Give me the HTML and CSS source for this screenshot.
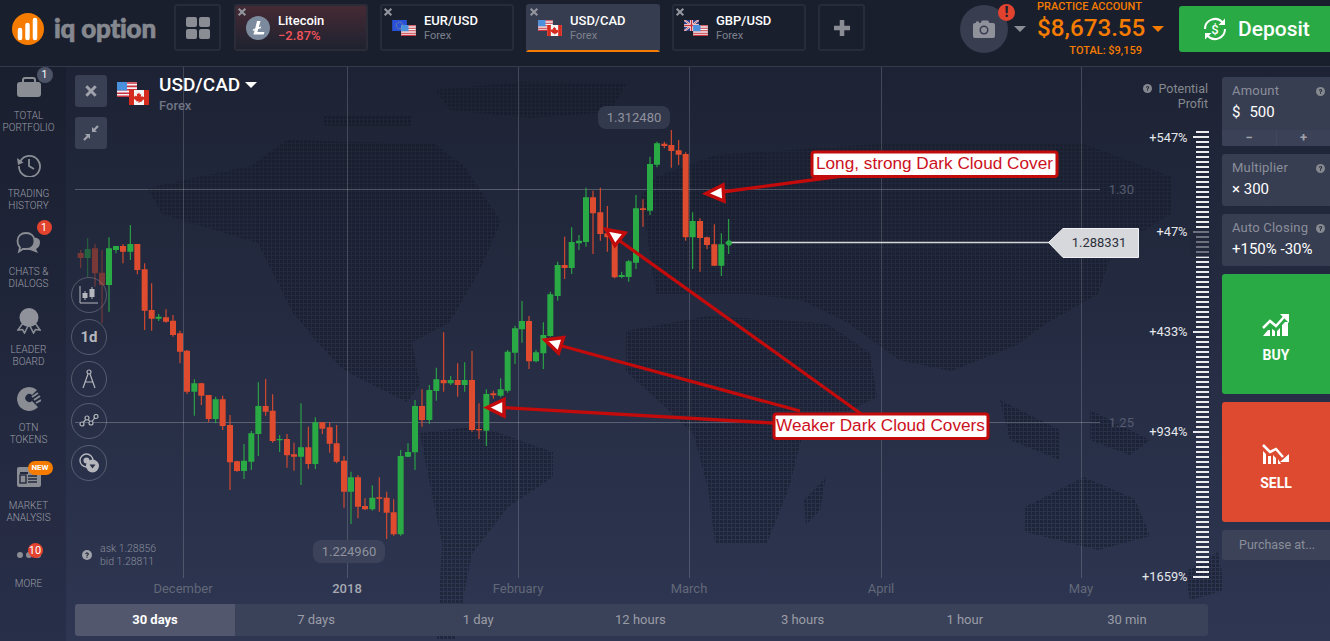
FILE: index.html
```html
<!DOCTYPE html>
<html lang="en">
<head>
<meta charset="utf-8">
<title>IQ Option</title>
<link rel="stylesheet" href="styles.css">
</head>
<body>
<svg class="defs" width="0" height="0" aria-hidden="true">
  <symbol id="f-us" viewBox="0 0 20 15">
    <rect width="20" height="15" fill="#f4f4f4"/>
    <path d="M0 1h20M0 4.4h20M0 7.8h20M0 11.2h20M0 14.2h20" stroke="#c8313e" stroke-width="1.6"/>
    <rect width="10" height="8.5" fill="#4a90dc"/>
  </symbol>
  <symbol id="f-ca" viewBox="0 0 20 15">
    <rect width="20" height="15" fill="#f4f4f4"/>
    <rect width="5" height="15" fill="#d52b1e"/><rect x="15" width="5" height="15" fill="#d52b1e"/>
    <path d="M10 2.5l1 2 1.2-.5-.4 3 1.6-1 .5 1 1.5-.2-.6 1.8.6.5-2.6 2-.4 1-2-.3V13h-.8v-1.7l-2 .3-.4-1-2.6-2 .6-.5-.6-1.8 1.5.2.5-1 1.6 1-.4-3 1.2.5z" fill="#d52b1e"/>
  </symbol>
  <symbol id="f-eu" viewBox="0 0 20 15">
    <rect width="20" height="15" fill="#2a52d8"/>
    <circle cx="10" cy="7.500" r="4.500" fill="none" stroke="#e8c83a" stroke-width="1" stroke-dasharray="1 1.350"/>
  </symbol>
  <symbol id="f-gb" viewBox="0 0 20 15">
    <rect width="20" height="15" fill="#2b3f8c"/>
    <path d="M0 0l20 15M20 0L0 15" stroke="#f4f4f4" stroke-width="2.600"/>
    <path d="M0 0l20 15M20 0L0 15" stroke="#c8313e" stroke-width="1"/>
    <path d="M10 0v15M0 7.500h20" stroke="#f4f4f4" stroke-width="4"/>
    <path d="M10 0v15M0 7.500h20" stroke="#c8313e" stroke-width="2"/>
  </symbol>
  <symbol id="help" viewBox="0 0 12 12">
    <circle cx="6" cy="6" r="6" fill="currentColor"/>
    <path d="M3.900 4.700C4 3.400 5 3 6 3c1.300 0 2.200.7 2.200 1.800 0 1.500-1.700 1.500-1.700 2.700H5.300c0-1.900 1.500-1.900 1.500-2.700 0-.5-.3-.7-.8-.7s-.8.300-.9.800zM5.300 8.200h1.300v1.200H5.300z" fill="#1e2436"/>
  </symbol>
  <symbol id="pair-x" viewBox="0 0 12 12">
    <path d="M2 2l8 8M10 2l-8 8" stroke="currentColor" stroke-width="2.500"/>
  </symbol>
</svg>

<div class="app">
  <header class="topbar">
    <div class="brand">
      <svg class="brand-mark" viewBox="0 0 32 32" width="32" height="32">
        <circle cx="16" cy="16" r="16" fill="#f57c00"/>
        <path d="M8 25v-8M15.500 25V12M23 25V7" stroke="#fff" stroke-width="4.500" stroke-linecap="round"/>
      </svg>
      <span class="brand-name">iq option</span>
    </div>
    <button class="square-btn grid-btn">
      <svg viewBox="0 0 24 22" width="24" height="22"><g fill="#8a8d94"><rect width="11" height="10" rx="2"/><rect x="13" width="11" height="10" rx="2"/><rect y="12" width="11" height="10" rx="2"/><rect x="13" y="12" width="11" height="10" rx="2"/></g></svg>
    </button>
    <nav class="tabs">
      <div class="tab tab-loss">
        <svg class="tab-close"><use href="#pair-x"/></svg>
        <svg class="coin" viewBox="0 0 24 24" width="24" height="24"><circle cx="12" cy="12" r="12" fill="#7b8a9c"/><path d="M11 5h3.500l-1.700 6.300 2.500-.9-.5 1.800-2.600.9-.8 2.900h7l-.7 2.500H7.400l1.300-4.300-2 .7.5-1.700 2-.7z" fill="#fff"/></svg>
        <div class="tab-text"><span class="tab-title">Litecoin</span><span class="tab-change">−2.87%</span></div>
      </div>
      <div class="tab">
        <svg class="tab-close"><use href="#pair-x"/></svg>
        <span class="flags"><svg class="flag-a"><use href="#f-eu"/></svg><svg class="flag-b"><use href="#f-us"/></svg></span>
        <div class="tab-text"><span class="tab-title">EUR/USD</span><span class="tab-sub">Forex</span></div>
      </div>
      <div class="tab tab-active">
        <svg class="tab-close"><use href="#pair-x"/></svg>
        <span class="flags"><svg class="flag-a"><use href="#f-us"/></svg><svg class="flag-b"><use href="#f-ca"/></svg></span>
        <div class="tab-text"><span class="tab-title">USD/CAD</span><span class="tab-sub">Forex</span></div>
      </div>
      <div class="tab">
        <svg class="tab-close"><use href="#pair-x"/></svg>
        <span class="flags"><svg class="flag-a"><use href="#f-gb"/></svg><svg class="flag-b"><use href="#f-us"/></svg></span>
        <div class="tab-text"><span class="tab-title">GBP/USD</span><span class="tab-sub">Forex</span></div>
      </div>
    </nav>
    <button class="square-btn plus-btn">
      <svg viewBox="0 0 16 16" width="16" height="16"><path d="M8 0v16M0 8h16" stroke="#8a8d94" stroke-width="4.500"/></svg>
    </button>
    <div class="profile">
      <div class="avatar">
        <svg viewBox="0 0 22 18" width="22" height="18"><path d="M0 5a2 2 0 0 1 2-2h1V1.500h3V3h1.500L9 .5h6L16.500 3H20a2 2 0 0 1 2 2v11a2 2 0 0 1-2 2H2a2 2 0 0 1-2-2z" fill="#8f929b"/><circle cx="11" cy="10" r="4.500" fill="#383d4f"/><circle cx="11" cy="10" r="3" fill="#8f929b"/></svg>
        <span class="alert">!</span>
      </div>
      <span class="caret caret-gray"></span>
    </div>
    <div class="balance">
      <div class="balance-label">PRACTICE ACCOUNT</div>
      <div class="balance-amount">$8,673.55<span class="caret caret-orange"></span></div>
      <div class="balance-total">TOTAL: $9,159</div>
    </div>
    <button class="deposit">
      <svg viewBox="0 0 26 26" width="26" height="26"><g fill="none" stroke="#fff" stroke-width="2"><path d="M3 13a10 10 0 0 1 17.500-6.600"/><path d="M23 13a10 10 0 0 1-17.500 6.600"/></g><path d="M23 2.500v6.500h-6.500zM3 23.500V17h6.500z" fill="#fff"/><text x="13" y="18" text-anchor="middle" class="deposit-sign">$</text></svg>
      <span>Deposit</span>
    </button>
  </header>

  <div class="workspace">
    <aside class="sidebar">
      <a class="side-item">
        <span class="side-icon">
          <svg viewBox="0 0 24 20" width="24" height="20"><path d="M6 6V3a2 2 0 0 1 2-2h8a2 2 0 0 1 2 2v3" fill="none" stroke="#8a8d94" stroke-width="2"/><rect y="5" width="24" height="15" rx="3" fill="#8a8d94"/></svg>
          <span class="badge badge-gray">1</span>
        </span>
        <span class="side-label">TOTAL<br>PORTFOLIO</span>
      </a>
      <a class="side-item">
        <span class="side-icon">
          <svg viewBox="0 0 24 24" width="24" height="24"><g fill="none" stroke="#8a8d94" stroke-width="1.800"><path d="M3.500 8A10.500 10.500 0 1 1 2 13"/><path d="M12 6v7l5 3"/></g><path d="M0 5l6.500 4.500L1 12z" fill="#8a8d94"/></svg>
        </span>
        <span class="side-label">TRADING<br>HISTORY</span>
      </a>
      <a class="side-item">
        <span class="side-icon">
          <svg viewBox="0 0 26 24" width="26" height="24"><path d="M24 11c0 4-2 6-4 7l2 4-8-3c-3 0-5-2-5-5 0-4 3-6 7-7 5-1 8 1 8 4z" fill="#8a8d94"/><path d="M1.500 10C1.500 5 5 2 10 2s8.500 3 8.500 8-3.500 8-8.500 8H7l-4 2.500 1-4C2.500 15 1.500 13 1.500 10z" fill="#232a3d" stroke="#8a8d94" stroke-width="1.800"/></svg>
          <span class="badge badge-red">1</span>
        </span>
        <span class="side-label">CHATS &amp;<br>DIALOGS</span>
      </a>
      <a class="side-item">
        <span class="side-icon">
          <svg viewBox="0 0 24 26" width="24" height="26"><path d="M6 15l-5 7 4.500-.5 2 3.500 4-8zM18 15l5 7-4.500-.5-2 3.500-4-8z" fill="none" stroke="#8a8d94" stroke-width="1.600"/><circle cx="12" cy="9.500" r="9.500" fill="#8f929b"/></svg>
        </span>
        <span class="side-label">LEADER<br>BOARD</span>
      </a>
      <a class="side-item">
        <span class="side-icon">
          <svg viewBox="0 0 24 24" width="24" height="24"><path d="M12 0a12 12 0 1 0 9 20l-6-6a4 4 0 1 1 0-6l5-5A12 12 0 0 0 12 0z" fill="#8a8d94"/><path d="M15 10l6-4M17 13l6-4M19 16l5-3" stroke="#8a8d94" stroke-width="2"/></svg>
        </span>
        <span class="side-label">OTN<br>TOKENS</span>
      </a>
      <a class="side-item">
        <span class="side-icon">
          <svg viewBox="0 0 24 20" width="24" height="20"><rect width="24" height="20" rx="2" fill="#8a8d94"/><rect x="3" y="5" width="8" height="2" fill="#232a3d"/><rect x="3" y="8" width="6" height="8" fill="none" stroke="#232a3d" stroke-width="1.400"/><path d="M11 9h9M11 12h9M11 15h9" stroke="#232a3d" stroke-width="1.400"/></svg>
          <span class="badge-new">NEW</span>
        </span>
        <span class="side-label">MARKET<br>ANALYSIS</span>
      </a>
      <a class="side-item">
        <span class="side-icon">
          <svg viewBox="0 0 24 6" width="24" height="6"><g fill="#8a8d94"><circle cx="3" cy="3" r="3"/><circle cx="12" cy="3" r="3"/><circle cx="21" cy="3" r="3"/></g></svg>
          <span class="badge badge-red badge-wide">10</span>
        </span>
        <span class="side-label">MORE</span>
      </a>
    </aside>

    <main class="chart">
      <svg class="chart-canvas" viewBox="66 67 1156 574" width="1156" height="574">
        <defs>
          <pattern id="dots" width="4" height="4" patternUnits="userSpaceOnUse">
            <rect width="3" height="3" fill="#141927"/>
          </pattern>
          <pattern id="ticks" width="13" height="5" y="131" patternUnits="userSpaceOnUse">
            <rect width="13" height="2" fill="#e9ebef"/>
          </pattern>
        </defs>

        <g class="map" fill="url(#dots)">
          <path d="M147 188L250 166 287 140 435 144 464 166 501 221 479 272 449 323 412 342 420 385 407 402 357 377 340 367 313 337 293 313 280 287 258 243 162 214z"/>
          <path d="M324 115L412 115 412 126 324 126z"/>
          <path d="M435 90L520 82 626 84 610 112 530 118 450 110z"/>
          <path d="M656 177L715 155 877 144 1084 144 1172 177 1172 213 1113 250 1098 294 1047 323 1017 345 951 371 899 360 848 323 803 301 752 294 656 294 641 195z"/>
          <path d="M626 331L708 316 826 323 870 353 877 397 803 433 789 488 767 543 715 543 708 488 693 433 626 371z"/>
          <path d="M420 433L479 426 553 452 553 477 508 507 472 554 455 640 437 640 442 543 427 470z"/>
          <path d="M1025 507L1084 477 1135 499 1150 536 1098 550 1025 532z"/>
          <path d="M1000 400L1060 430 1060 460 1010 440zM1090 410L1150 440 1130 455 1090 440zM804 500L826 477 820 510 806 525z"/>
          <path d="M1185 572L1218 552 1225 590 1190 600z"/>
        </g>

        <g class="grid-lines">
          <path d="M183.500 67V578M347.500 67V578M518.500 67V578M689.500 67V578M881.500 67V578M1081.500 67V578"/>
          <path class="grid-h" d="M75 189.500H1100M75 422.500H1100"/>
        </g>
        <text x="1134" y="194" class="axis-price">1.30</text>
        <text x="1134" y="427" class="axis-price">1.25</text>

        <g transform="translate(90 220) scale(.33333)">
          <g class="faded">
            <path class="wick-r" d="M-28 90V144M15 72V200M36 90V310"/>
            <path class="body-r" d="M-28 99V114M15 85V160M36 158V195"/>
            <path class="wick-g" d="M-7 54V171"/>
            <path class="body-g" d="M-7 87V114"/>
          </g>
          <path class="wick-r" d="M99 72V130M142 72V163M164 130V330M185 190V332M228 268V308M249 285V350M270 332V430M291 390V522M334 488V555M356 525V607M398 527V630M420 585V810M441 722V755M527 477V587M548 523V668M591 642V743M612 668V752M655 620V747M697 607V642M719 607V698M740 615V730M762 708V863M804 765V895M825 835V870M868 772V875M890 815V957M911 838V947"/>
          <path class="body-r" d="M99 78V95M142 72V150M164 148V272M185 270V296M228 292V305M249 302V345M270 340V395M291 392V515M334 490V527M356 525V597M398 538V618M420 615V727M441 724V753M527 558V575M548 572V663M591 657V706M612 703V710M655 682V732M697 607V626M719 622V671M740 670V725M762 722V815M804 772V860M825 858V868M868 832V836M890 833V878M911 877V943"/>
          <path class="wick-g" d="M57 52V275M78 78V100M121 15V120M206 282V303M313 478V587M377 530V610M462 672V777M484 633V750M505 487V708M569 645V696M633 550V795M676 592V747M783 755V912M847 796V872M932 690V947M954 670V712M975 540V750"/>
          <path class="body-g" d="M57 85V195M78 78V90M121 72V95M206 290V296M313 490V515M377 538V597M462 722V753M484 640V725M505 558V642M569 657V661M633 682V710M676 607V732M783 772V815M847 833V868M932 708V943M954 696V710M975 558V697"/>
        </g>
        <g transform="translate(400 120) scale(.33333)">
          <path class="wick-r" d="M66 808V920M131 637V815M173 730V830M216 693V935M237 850V957M280 812V836M387 588V747M494 350V477M579 212V402M601 203V362M622 258V395M644 350V475M729 238V320M793 65V85M814 30V143M836 60V135M857 97V362M900 295V455M921 350V387M943 313V438"/>
          <path class="body-r" d="M66 858V900M131 780V790M173 780V795M216 780V930M237 927V931M280 820V826M387 603V724M494 435V444M579 232V280M601 277V342M622 340V352M644 350V472M729 265V270M793 71V78M814 75V93M836 91V104M857 102V352M900 303V354M921 352V375M943 373V437"/>
          <path class="wick-g" d="M88 795V912M109 743V842M152 768V795M194 727V815M259 808V978M302 775V832M323 690V818M345 617V732M366 543V668M408 690V727M430 607V747M451 515V650M473 425V542M515 322V462M537 345V390M558 203V380M665 455V475M686 420V485M708 225V447M750 110V285M771 65V142M878 277V447M964 340V468M986 297V402"/>
          <path class="body-g" d="M88 810V900M109 778V813M152 780V790M194 780V795M259 822V932M302 808V827M323 695V812M345 625V698M366 603V628M408 697V724M430 645V700M451 523V648M473 435V528M515 366V444M537 362V370M558 232V366M665 465V471M686 424V471M708 265V428M750 132V272M771 70V134M878 303V352M964 373V437M986 365V372"/>
        </g>

        <rect x="598" y="106" width="72" height="23" rx="8" class="bubble-top"/>
        <text x="634" y="122" class="bubble-text">1.312480</text>
        <rect x="313" y="540" width="72" height="23" rx="8" class="bubble-bottom"/>
        <text x="349" y="556" class="bubble-text">1.224960</text>

        <path class="price-line" d="M730 242.500H1050"/>
        <circle cx="729" cy="243" r="2.800" fill="#2aaa45"/>
        <path class="price-tag" d="M1048.500 242.500L1063 228.500H1138.500V257.500H1063z"/>
        <text x="1099" y="247" class="price-text">1.288331</text>

        <text x="183" y="593" class="month">December</text>
        <text x="347" y="593" class="month month-strong">2018</text>
        <text x="518" y="593" class="month">February</text>
        <text x="689" y="593" class="month">March</text>
        <text x="881" y="593" class="month">April</text>
        <text x="1081" y="593" class="month">May</text>

        <rect x="1196" y="131" width="13" height="448" fill="url(#ticks)"/>
        <path class="major" d="M1193 137H1196M1193 232H1196M1193 332H1196M1193 432H1196M1193 577H1196"/>
        <rect x="1190" y="229" width="20" height="28" class="ruler-dim"/>
        <text x="1187.500" y="142" class="profit">+547%</text>
        <text x="1187.500" y="236" class="profit">+47%</text>
        <text x="1187.500" y="336" class="profit">+433%</text>
        <text x="1187.500" y="436" class="profit">+934%</text>
        <text x="1187.500" y="581" class="profit">+1659%</text>

        <g class="arrow">
          <path class="arrow-line" d="M722 192L842 176"/>
          <path class="arrow-head" d="M706 193.500L723 185 724 201z"/>
          <path class="arrow-line" d="M503 407.500L790 424"/>
          <path class="arrow-head" d="M487 407.500L504 399.500 504 416z"/>
          <path class="arrow-line" d="M562 346L800 411"/>
          <path class="arrow-head" d="M545 340L563.500 337.500 558.500 353z"/>
          <path class="arrow-line" d="M620 241L864 416"/>
          <path class="arrow-head" d="M606 229.500L625 233 615 245.500z"/>
        </g>
        <rect x="812" y="152" width="245" height="24.500" rx="2.500" class="note-box"/>
        <text x="816" y="169" class="note-text">Long, strong Dark Cloud Cover</text>
        <rect x="774" y="414" width="214" height="24.500" rx="2.500" class="note-box"/>
        <text x="776" y="431" class="note-text">Weaker Dark Cloud Covers</text>
      </svg>

      <div class="chart-head">
        <div class="chart-controls">
          <button class="ctl"><svg width="14" height="14"><use href="#pair-x"/></svg></button>
          <button class="ctl">
            <svg viewBox="0 0 16 16" width="16" height="16"><path d="M1 15l5-5M15 1l-5 5" stroke="#a0a3ab" stroke-width="2.200"/><path d="M9 2v5h5zM2 9h5v5z" fill="#a0a3ab"/></svg>
          </button>
        </div>
        <span class="pair-flags"><svg class="flag-a"><use href="#f-us"/></svg><svg class="flag-b"><use href="#f-ca"/></svg></span>
        <div class="pair">
          <div class="pair-name">USD/CAD<span class="caret caret-white"></span></div>
          <div class="pair-type">Forex</div>
        </div>
        <div class="potential"><svg class="help-sm"><use href="#help"/></svg> Potential<br>Profit</div>
      </div>

      <div class="tools">
        <button class="tool">
          <svg viewBox="0 0 20 18" width="20" height="18"><path d="M1 0v17h18" fill="none" stroke="#b5b7bd" stroke-width="1"/><path d="M6 5v9M13 1v12" stroke="#b5b7bd"/><rect x="3.500" y="7" width="5" height="5" fill="#b5b7bd"/><rect x="10.500" y="3" width="5" height="8" fill="#b5b7bd"/></svg>
        </button>
        <button class="tool tool-text">1d</button>
        <button class="tool">
          <svg viewBox="0 0 16 22" width="16" height="22"><g fill="none" stroke="#b5b7bd" stroke-width="1.200"><circle cx="8" cy="4" r="2"/><path d="M7 6L2 20M9 6l5 14M3.500 14h9"/></g></svg>
        </button>
        <button class="tool">
          <svg viewBox="0 0 20 14" width="20" height="14"><path d="M3 10l5-6 4 5 5-7" fill="none" stroke="#b5b7bd" stroke-width="1.200"/><g fill="#232a3d" stroke="#b5b7bd" stroke-width="1.200"><circle cx="3" cy="10" r="2"/><circle cx="8" cy="4" r="2"/><circle cx="12" cy="9" r="2"/><circle cx="17" cy="2.500" r="2"/></g></svg>
        </button>
        <button class="tool">
          <svg viewBox="0 0 20 20" width="20" height="20"><circle cx="7.500" cy="7.500" r="6.500" fill="none" stroke="#b5b7bd" stroke-width="1.400"/><circle cx="7.500" cy="7.500" r="3" fill="#b5b7bd"/><circle cx="13.500" cy="13" r="6.500" fill="#b5b7bd"/><path d="M10.500 11.500h6l-3 4z" fill="#2a3147"/></svg>
        </button>
      </div>

      <div class="quotes">
        <svg class="help-md"><use href="#help"/></svg>
        <div>ask 1.28856<br>bid 1.28811</div>
      </div>

      <div class="timeframes">
        <span class="tf tf-active">30 days</span>
        <span class="tf">7 days</span>
        <span class="tf">1 day</span>
        <span class="tf">12 hours</span>
        <span class="tf">3 hours</span>
        <span class="tf">1 hour</span>
        <span class="tf">30 min</span>
      </div>
    </main>

    <aside class="panel">
      <div class="field field-amount">
        <div class="field-body">
          <div class="field-label">Amount<svg class="help-sm"><use href="#help"/></svg></div>
          <div class="field-value"><span class="cur">$</span>500</div>
        </div>
        <div class="stepper"><span>−</span><span>+</span></div>
      </div>
      <div class="field">
        <div class="field-body">
          <div class="field-label">Multiplier<svg class="help-sm"><use href="#help"/></svg></div>
          <div class="field-value">× 300</div>
        </div>
      </div>
      <div class="field">
        <div class="field-body">
          <div class="field-label">Auto Closing<svg class="help-sm"><use href="#help"/></svg></div>
          <div class="field-value">+150% -30%</div>
        </div>
      </div>
      <button class="trade trade-buy">
        <svg viewBox="0 0 28 22" width="28" height="22"><path d="M1 14l7-7 6 5 8-9" fill="none" stroke="#fff" stroke-width="2.500"/><path d="M18 0h9v9z" fill="#fff"/><path d="M1 22l5-6h2v6zM10 22v-7l3 2v5zM15 22v-5l3-3v8zM20 22V11l3-3h3v14z" fill="#fff"/></svg>
        <span>BUY</span>
      </button>
      <button class="trade trade-sell">
        <svg viewBox="0 0 28 20" width="28" height="20"><path d="M1 1l7 7 6-3 7 8" fill="none" stroke="#fff" stroke-width="2.500"/><path d="M27 18h-9l9-8z" fill="#fff"/><path d="M1 7v13h3V10zM6 12v8h3v-8zM11 11v9h3v-6zM16 15v5h3z" fill="#fff"/></svg>
        <span>SELL</span>
      </button>
      <button class="purchase">Purchase at...</button>
    </aside>
  </div>
</div>
</body>
</html>
```

FILE: styles.css
```css
* { box-sizing: border-box; }
html, body { margin: 0; padding: 0; height: 641px; overflow: hidden; }
body { font-family: Roboto, "Liberation Sans", sans-serif; background: #1a1f2e; color: #fff; }
button { font: inherit; color: inherit; border: 0; padding: 0; cursor: pointer; }
.defs { position: absolute; }

.app { width: 1330px; height: 641px; display: flex; flex-direction: column; }

/* top bar */
.topbar { height: 67px; flex: none; display: flex; align-items: flex-start; background: #1a1f2e; border-bottom: 1px solid #333a4e; }
.brand { width: 174px; height: 58px; padding-left: 12px; display: flex; align-items: center; gap: 10px; }
.brand-mark { flex: none; }
.brand-name { font-family: Lato, sans-serif; font-weight: 900; font-size: 26px; letter-spacing: -.2px; color: #85888f; white-space: nowrap; -webkit-text-stroke: .7px #85888f; margin-top: -3px; }
.square-btn { flex: none; margin-top: 4px; height: 47px; width: 47px; background: transparent; border: 2px solid #262c3c; border-radius: 3px; display: flex; align-items: center; justify-content: center; }
.tabs { display: flex; gap: 12px; margin-left: 13px; margin-right: 12px; margin-top: 4px; }
.tab { position: relative; width: 134px; height: 47px; border: 2px solid #262c3c; border-radius: 3px; display: flex; align-items: center; padding-left: 10px; }
.tab-loss { width: 134px; border-color: #2c2b38; background: linear-gradient(180deg, #452a34, #1f2230); padding-left: 10px; }
.tab-active { background: #373d50; border-color: #373d50; border-bottom: 2px solid #f57c00; border-radius: 3px 3px 0 0; height: 48px; }
.tab-close { position: absolute; left: 1px; top: 1px; width: 10px; height: 10px; color: #93969e; }
.coin { flex: none; margin-right: 8px; }
.flags { position: relative; flex: none; width: 25px; height: 16px; margin-right: 7px; }
.flags .flag-a { position: absolute; left: 0; top: 0; width: 15px; height: 11px; }
.flags .flag-b { position: absolute; left: 9px; top: 5px; width: 15px; height: 11px; }
.tab-text { display: flex; flex-direction: column; line-height: 15px; }
.tab-title { font-size: 13px; font-weight: 500; color: #fff; }
.tab-sub { font-size: 11px; color: #7d818c; }
.tab-change { font-size: 13px; font-weight: 500; color: #f2545b; }

.profile { margin-left: auto; width: 76px; height: 58px; display: flex; align-items: center; }
.avatar { position: relative; width: 48px; height: 48px; border-radius: 50%; background: #383d4f; display: flex; align-items: center; justify-content: center; }
.alert { position: absolute; right: -7px; top: -1px; width: 17px; height: 17px; border-radius: 50%; background: #e2432f; font-size: 14px; font-weight: 900; line-height: 17px; text-align: center; color: #1a1f2e; }
.caret { display: inline-block; width: 0; height: 0; border-style: solid; border-color: transparent; border-width: 6px 6px 0 6px; }
.caret-gray { border-top-color: #8a8d94; margin-left: 6px; }
.caret-orange { border-top-color: #f57c00; margin-left: 7px; vertical-align: 4px; }
.caret-white { border-top-color: #fff; margin-left: 5px; vertical-align: 3px; }
.balance { width: 143px; height: 60px; color: #f57c00; font-weight: 500; padding-left: 1px; }
.balance-label { font-size: 11px; line-height: 14px; }
.balance-amount { font-size: 24.200px; line-height: 30px; font-weight: 500; white-space: nowrap; margin-top: -1px; }
.balance-total { font-size: 11px; line-height: 14px; text-align: right; padding-right: 37px; margin-top: 1px; }
.deposit { flex: none; width: 151px; height: 46px; margin-top: 6px; background: #2aaa45; border-radius: 3px 0 0 3px; color: #fff; display: flex; align-items: center; gap: 10px; padding-left: 23px; font-size: 21px; font-weight: 500; }
.deposit-sign { font: 500 13px Roboto, sans-serif; fill: #fff; }

/* workspace */
.workspace { flex: 1; min-height: 0; display: flex; background: linear-gradient(180deg, #1d2334 0%, #2e3652 100%); }
.sidebar { width: 66px; flex: none; padding-top: 1px; padding-right: 9px; background: rgba(10, 14, 26, .16); }
.side-item { display: flex; flex-direction: column; align-items: center; height: 78px; }
.side-icon { position: relative; height: 38px; display: flex; align-items: center; justify-content: center; }
.side-label { margin-top: 4px; font-size: 10px; line-height: 12px; font-weight: 300; color: #9a9da6; text-align: center; white-space: nowrap; }
.badge { position: absolute; right: -10px; top: 2px; min-width: 15px; height: 15px; border-radius: 8px; font-size: 10.500px; line-height: 15px; text-align: center; color: #fff; }
.badge-gray { background: #4d5367; right: -12px; top: -1px; width: 16px; height: 16px; line-height: 16px; }
.badge-red { background: #e2432f; right: -10px; top: -4px; }
.badge-wide { top: 7px; right: -2px; font-size: 11px; }
.badge-new { position: absolute; right: -12px; top: 3px; width: 25px; height: 14px; border-radius: 7px; background: #f57c00; font-size: 8px; line-height: 14px; font-weight: 700; text-align: center; color: #fff; }

/* chart */
.chart { position: relative; flex: 1; min-width: 0; display: flex; flex-direction: column; padding: 8px 14px 5px 9px; }
.chart-canvas { position: absolute; left: 0; top: 0; }
.chart-head, .tools, .quotes, .timeframes { position: relative; }
.chart-head { display: flex; height: 74px; }
.chart-controls { display: flex; flex-direction: column; gap: 10px; }
.ctl { width: 32px; height: 32px; background: #3a4054; border-radius: 3px; display: flex; align-items: center; justify-content: center; color: #a0a3ab; }
.pair-flags { position: relative; flex: none; width: 32px; height: 23px; margin: 7px 10px 0 10px; }
.pair-flags .flag-a { position: absolute; left: 0; top: 0; width: 20px; height: 15px; }
.pair-flags .flag-b { position: absolute; left: 12px; top: 8px; width: 20px; height: 15px; }
.pair-name { font-size: 19px; font-weight: 500; line-height: 22px; margin-top: -1px; white-space: nowrap; }
.pair-type { font-size: 13px; font-weight: 500; line-height: 18px; margin-top: 1px; color: #6f7484; }
.potential { margin-left: auto; margin-top: 6px; text-align: right; font-size: 12.500px; line-height: 15px; color: #85888f; }
.help-sm { width: 9px; height: 9px; color: #85888f; margin-right: 3px; }

.tools { display: flex; flex-direction: column; gap: 6px; margin-top: 128px; margin-left: -4px; }
.tool { width: 36px; height: 36px; border-radius: 50%; border: 1px solid rgba(255, 255, 255, .22); background: transparent; display: flex; align-items: center; justify-content: center; }
.tool-text { font-size: 15px; font-weight: 700; color: #b5b7bd; }
.quotes { margin-top: 61px; padding-left: 7px; display: flex; align-items: center; gap: 8px; font-size: 10.500px; line-height: 13px; color: #8a8e9a; font-weight: 300; }
.help-md { width: 10px; height: 10px; color: #a0a3ab; }

.timeframes { margin-top: auto; height: 32px; display: grid; grid-template-columns: 160px repeat(6, 1fr); background: rgba(60, 67, 89, .94); border-radius: 3px; overflow: hidden; }
.tf { display: flex; align-items: center; justify-content: center; font-size: 13px; color: #9a9da6; padding-bottom: 2px; }
.tf-active { background: #52576d; color: #fff; font-weight: 700; }

/* chart svg parts */
.map { opacity: .5; }
.grid-lines path { fill: none; stroke: #fff; stroke-opacity: .17; stroke-width: 1; }
.grid-lines .grid-h { stroke-opacity: .24; }
.wick-r, .wick-g { fill: none; stroke-width: 3.300; }
.body-r, .body-g { fill: none; stroke-width: 18; }
.wick-r, .body-r { stroke: #de4b2e; }
.wick-g, .body-g { stroke: #2aaa45; }
.faded { opacity: .45; }
.axis-price { font-size: 13px; fill: #565c70; text-anchor: end; }
.bubble-top { fill: #33394c; }
.bubble-bottom { fill: #3b4259; }
.bubble-text { font-size: 13px; fill: #8f929e; text-anchor: middle; }
.price-line { stroke: #d4d6da; stroke-width: 1.500; fill: none; }
.price-tag { fill: #d6d8dc; stroke: #f0f1f3; stroke-width: 1; }
.price-text { font-size: 13px; fill: #2b2f3a; text-anchor: middle; }
.month { font-size: 13px; fill: #626879; text-anchor: middle; }
.month-strong { font-weight: 500; fill: #a6a9b3; }
.major { stroke: #e9ebef; stroke-width: 2; fill: none; }
.ruler-dim { fill: #20263a; opacity: .62; }
.profit { font-size: 12.800px; fill: #e6e8ec; text-anchor: end; }
.arrow-line { fill: none; stroke: #c30b0b; stroke-width: 3.300; }
.arrow-head { fill: #fff; stroke: #c30b0b; stroke-width: 3.500; stroke-linejoin: miter; }
.note-box { fill: #fff; stroke: #c30b0b; stroke-width: 3; }
.note-text { font-family: "Liberation Sans", Arial, sans-serif; font-size: 17.200px; fill: #cc1122; }

/* right panel */
.panel { width: 108px; flex: none; padding-top: 10px; display: flex; flex-direction: column; gap: 8px; }
.field { background: #383e52; border-radius: 3px 0 0 3px; overflow: hidden; }
.field-body { height: 52px; padding: 6px 0 0 10px; }
.field-amount .field-body { height: 53px; }
.field-label { display: flex; justify-content: space-between; align-items: center; padding-right: 2px; font-size: 13px; line-height: 16px; color: #8a8e9a; letter-spacing: .2px; }
.field-value { font-size: 15px; line-height: 20px; margin-top: 3px; color: #fff; white-space: nowrap; }
.cur { margin-right: 9px; }
.stepper { display: flex; height: 16px; background: #41475c; gap: 1px; }
.stepper span { flex: 1; display: flex; align-items: center; justify-content: center; background: #3b4156; color: #a0a3ab; font-size: 13px; font-weight: 700; line-height: 16px; }
.stepper span:first-child { flex: 0 0 54px; }
.trade { height: 120px; border-radius: 3px 0 0 3px; display: flex; flex-direction: column; align-items: center; color: #fff; font-size: 14px; font-weight: 700; }
.trade-buy { background: #2aaa45; padding-top: 40px; gap: 11px; }
.trade-sell { background: #dd4a2f; padding-top: 42px; gap: 11px; }
.purchase { height: 30px; background: #3c4359; border-radius: 3px 0 0 3px; color: #8a8e9a; font-size: 12.500px; text-align: left; padding: 0 0 2px 17px; }
```
